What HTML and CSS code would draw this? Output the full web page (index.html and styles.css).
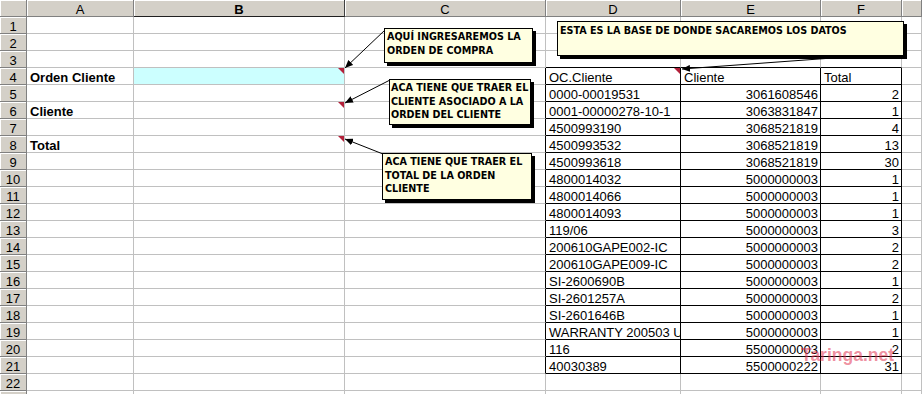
FILE: index.html
```html
<!DOCTYPE html>
<html lang="es">
<head>
<meta charset="utf-8">
<title>Hoja</title>
<link rel="stylesheet" href="styles.css">
</head>
<body>
<div class="sheet">
  <div class="r"><div class="c h"></div><div class="c h">A</div><div class="c h sel">B</div><div class="c h">C</div><div class="c h">D</div><div class="c h">E</div><div class="c h">F</div><div class="c h"></div></div>
  <div class="r"><div class="c rh">1</div><div class="c"></div><div class="c"></div><div class="c"></div><div class="c"></div><div class="c"></div><div class="c"></div><div class="c"></div></div>
  <div class="r"><div class="c rh">2</div><div class="c"></div><div class="c"></div><div class="c"></div><div class="c"></div><div class="c"></div><div class="c"></div><div class="c"></div></div>
  <div class="r"><div class="c rh">3</div><div class="c"></div><div class="c"></div><div class="c"></div><div class="c tt"></div><div class="c tt"></div><div class="c tt"></div><div class="c"></div></div>
  <div class="r"><div class="c rh">4</div><div class="c b">Orden Cliente</div><div class="c cy"></div><div class="c tl"></div><div class="c t">OC.Cliente</div><div class="c t">Cliente</div><div class="c t">Total</div><div class="c"></div></div>
  <div class="r"><div class="c rh">5</div><div class="c"></div><div class="c"></div><div class="c tl"></div><div class="c t">0000-00019531</div><div class="c t n">3061608546</div><div class="c t n">2</div><div class="c"></div></div>
  <div class="r"><div class="c rh">6</div><div class="c b">Cliente</div><div class="c"></div><div class="c tl"></div><div class="c t">0001-00000278-10-1</div><div class="c t n">3063831847</div><div class="c t n">1</div><div class="c"></div></div>
  <div class="r"><div class="c rh">7</div><div class="c"></div><div class="c"></div><div class="c tl"></div><div class="c t">4500993190</div><div class="c t n">3068521819</div><div class="c t n">4</div><div class="c"></div></div>
  <div class="r"><div class="c rh">8</div><div class="c b">Total</div><div class="c"></div><div class="c tl"></div><div class="c t">4500993532</div><div class="c t n">3068521819</div><div class="c t n">13</div><div class="c"></div></div>
  <div class="r"><div class="c rh">9</div><div class="c"></div><div class="c"></div><div class="c tl"></div><div class="c t">4500993618</div><div class="c t n">3068521819</div><div class="c t n">30</div><div class="c"></div></div>
  <div class="r"><div class="c rh">10</div><div class="c"></div><div class="c"></div><div class="c tl"></div><div class="c t">4800014032</div><div class="c t n">5000000003</div><div class="c t n">1</div><div class="c"></div></div>
  <div class="r"><div class="c rh">11</div><div class="c"></div><div class="c"></div><div class="c tl"></div><div class="c t">4800014066</div><div class="c t n">5000000003</div><div class="c t n">1</div><div class="c"></div></div>
  <div class="r"><div class="c rh">12</div><div class="c"></div><div class="c"></div><div class="c tl"></div><div class="c t">4800014093</div><div class="c t n">5000000003</div><div class="c t n">1</div><div class="c"></div></div>
  <div class="r"><div class="c rh">13</div><div class="c"></div><div class="c"></div><div class="c tl"></div><div class="c t">119/06</div><div class="c t n">5000000003</div><div class="c t n">3</div><div class="c"></div></div>
  <div class="r"><div class="c rh">14</div><div class="c"></div><div class="c"></div><div class="c tl"></div><div class="c t">200610GAPE002-IC</div><div class="c t n">5000000003</div><div class="c t n">2</div><div class="c"></div></div>
  <div class="r"><div class="c rh">15</div><div class="c"></div><div class="c"></div><div class="c tl"></div><div class="c t">200610GAPE009-IC</div><div class="c t n">5000000003</div><div class="c t n">2</div><div class="c"></div></div>
  <div class="r"><div class="c rh">16</div><div class="c"></div><div class="c"></div><div class="c tl"></div><div class="c t">SI-2600690B</div><div class="c t n">5000000003</div><div class="c t n">1</div><div class="c"></div></div>
  <div class="r"><div class="c rh">17</div><div class="c"></div><div class="c"></div><div class="c tl"></div><div class="c t">SI-2601257A</div><div class="c t n">5000000003</div><div class="c t n">2</div><div class="c"></div></div>
  <div class="r"><div class="c rh">18</div><div class="c"></div><div class="c"></div><div class="c tl"></div><div class="c t">SI-2601646B</div><div class="c t n">5000000003</div><div class="c t n">1</div><div class="c"></div></div>
  <div class="r"><div class="c rh">19</div><div class="c"></div><div class="c"></div><div class="c tl"></div><div class="c t">WARRANTY 200503 U</div><div class="c t n">5000000003</div><div class="c t n">1</div><div class="c"></div></div>
  <div class="r"><div class="c rh">20</div><div class="c"></div><div class="c"></div><div class="c tl"></div><div class="c t">116</div><div class="c t n">5500000003</div><div class="c t n">2</div><div class="c"></div></div>
  <div class="r"><div class="c rh">21</div><div class="c"></div><div class="c"></div><div class="c tl"></div><div class="c t">40030389</div><div class="c t n">5500000222</div><div class="c t n">31</div><div class="c"></div></div>
  <div class="r"><div class="c rh">22</div><div class="c"></div><div class="c"></div><div class="c"></div><div class="c"></div><div class="c"></div><div class="c"></div><div class="c"></div></div>
  <div class="r"><div class="c rh"></div><div class="c"></div><div class="c"></div><div class="c"></div><div class="c"></div><div class="c"></div><div class="c"></div><div class="c"></div></div>

  <svg class="overlay" width="922" height="394" viewBox="0 0 922 394">
    <defs>
      <marker id="ah" markerUnits="userSpaceOnUse" markerWidth="9" markerHeight="7" refX="8" refY="3.5" orient="auto">
        <path d="M0,0 L8,3.5 L0,7 z" fill="#000"/>
      </marker>
    </defs>
    <polygon points="338,68 344,68 344,74" fill="#b3203a"/>
    <polygon points="338,102 344,102 344,108" fill="#b3203a"/>
    <polygon points="338,136 344,136 344,142" fill="#b3203a"/>
    <polygon points="674,68 680,68 680,74" fill="#b3203a"/>
    <line x1="385" y1="30" x2="345" y2="68" stroke="#000" stroke-width="1" marker-end="url(#ah)"/>
    <line x1="390" y1="80" x2="345" y2="103" stroke="#000" stroke-width="1" marker-end="url(#ah)"/>
    <line x1="383" y1="154" x2="345" y2="139" stroke="#000" stroke-width="1" marker-end="url(#ah)"/>
    <line x1="860" y1="56" x2="682" y2="69" stroke="#000" stroke-width="1" marker-end="url(#ah)"/>
  </svg>

  <div class="note n1">AQUÍ INGRESAREMOS LA ORDEN DE COMPRA</div>
  <div class="note n2">ACA TIENE QUE TRAER EL CLIENTE ASOCIADO A LA ORDEN DEL CLIENTE</div>
  <div class="note n3">ACA TIENE QUE TRAER EL TOTAL DE LA ORDEN CLIENTE</div>
  <div class="note n4">ESTA ES LA BASE DE DONDE SACAREMOS LOS DATOS</div>

  <div class="mark">Taringa.net</div>
</div>
</body>
</html>
```

FILE: styles.css
```css
html, body {
  margin: 0;
  padding: 0;
  background: #fff;
}

.sheet {
  position: relative;
  width: 922px;
  height: 394px;
  overflow: hidden;
  font-family: "Liberation Sans", Arial, sans-serif;
  font-size: 13px;
  color: #000;
}

.r {
  display: grid;
  grid-template-columns: 27px 107px 211px 201px 135px 140px 81px 1fr;
  height: 17px;
}

.c {
  box-sizing: border-box;
  height: 17px;
  border-right: 1px solid #c0c0c0;
  border-bottom: 1px solid #c0c0c0;
  padding: 3px 2px 0 3px;
  line-height: 13px;
  white-space: nowrap;
  overflow: hidden;
}

.h, .rh {
  background: #d4d0c8;
  border-right: 1px solid #808080;
  border-bottom: 1px solid #808080;
  box-shadow: inset 1px 1px 0 #fff;
  text-align: center;
  padding: 3px 0 0 0;
}

.sel {
  font-weight: bold;
  border-right: 1px solid #404040;
  border-bottom: 1px solid #202020;
}

.b {
  font-weight: bold;
}

.cy {
  background: #ccffff;
}

.t {
  border-right: 1px solid #000;
  border-bottom: 1px solid #000;
}

.tt {
  border-bottom: 1px solid #000;
}

.tl {
  border-right: 1px solid #000;
}

.n {
  text-align: right;
  padding-right: 2px;
}

.overlay {
  position: absolute;
  left: 0;
  top: 0;
}

.note {
  position: absolute;
  box-sizing: border-box;
  background: #ffffe1;
  border: 1px solid #000;
  box-shadow: 3px 3px 0 #000;
  padding: 1px 0 1px 2px;
  font-family: "DejaVu Sans Condensed", "DejaVu Sans", sans-serif;
  font-stretch: condensed;
  font-weight: bold;
  font-size: 10.7px;
  line-height: 13.5px;
}

.n1 { left: 384px; top: 28px; width: 149px; height: 35px; }
.n2 { left: 389px; top: 79px; width: 142px; height: 46px; padding-left: 1px; }
.n3 { left: 382px; top: 153px; width: 150px; height: 47px; }
.n4 { left: 557px; top: 21px; width: 347px; height: 35px; padding-top: 2px; }

.mark {
  position: absolute;
  left: 801px;
  top: 345px;
  font-family: "Liberation Sans", Arial, sans-serif;
  font-weight: bold;
  font-size: 17.5px;
  color: rgba(225, 50, 80, 0.55);
}
```
